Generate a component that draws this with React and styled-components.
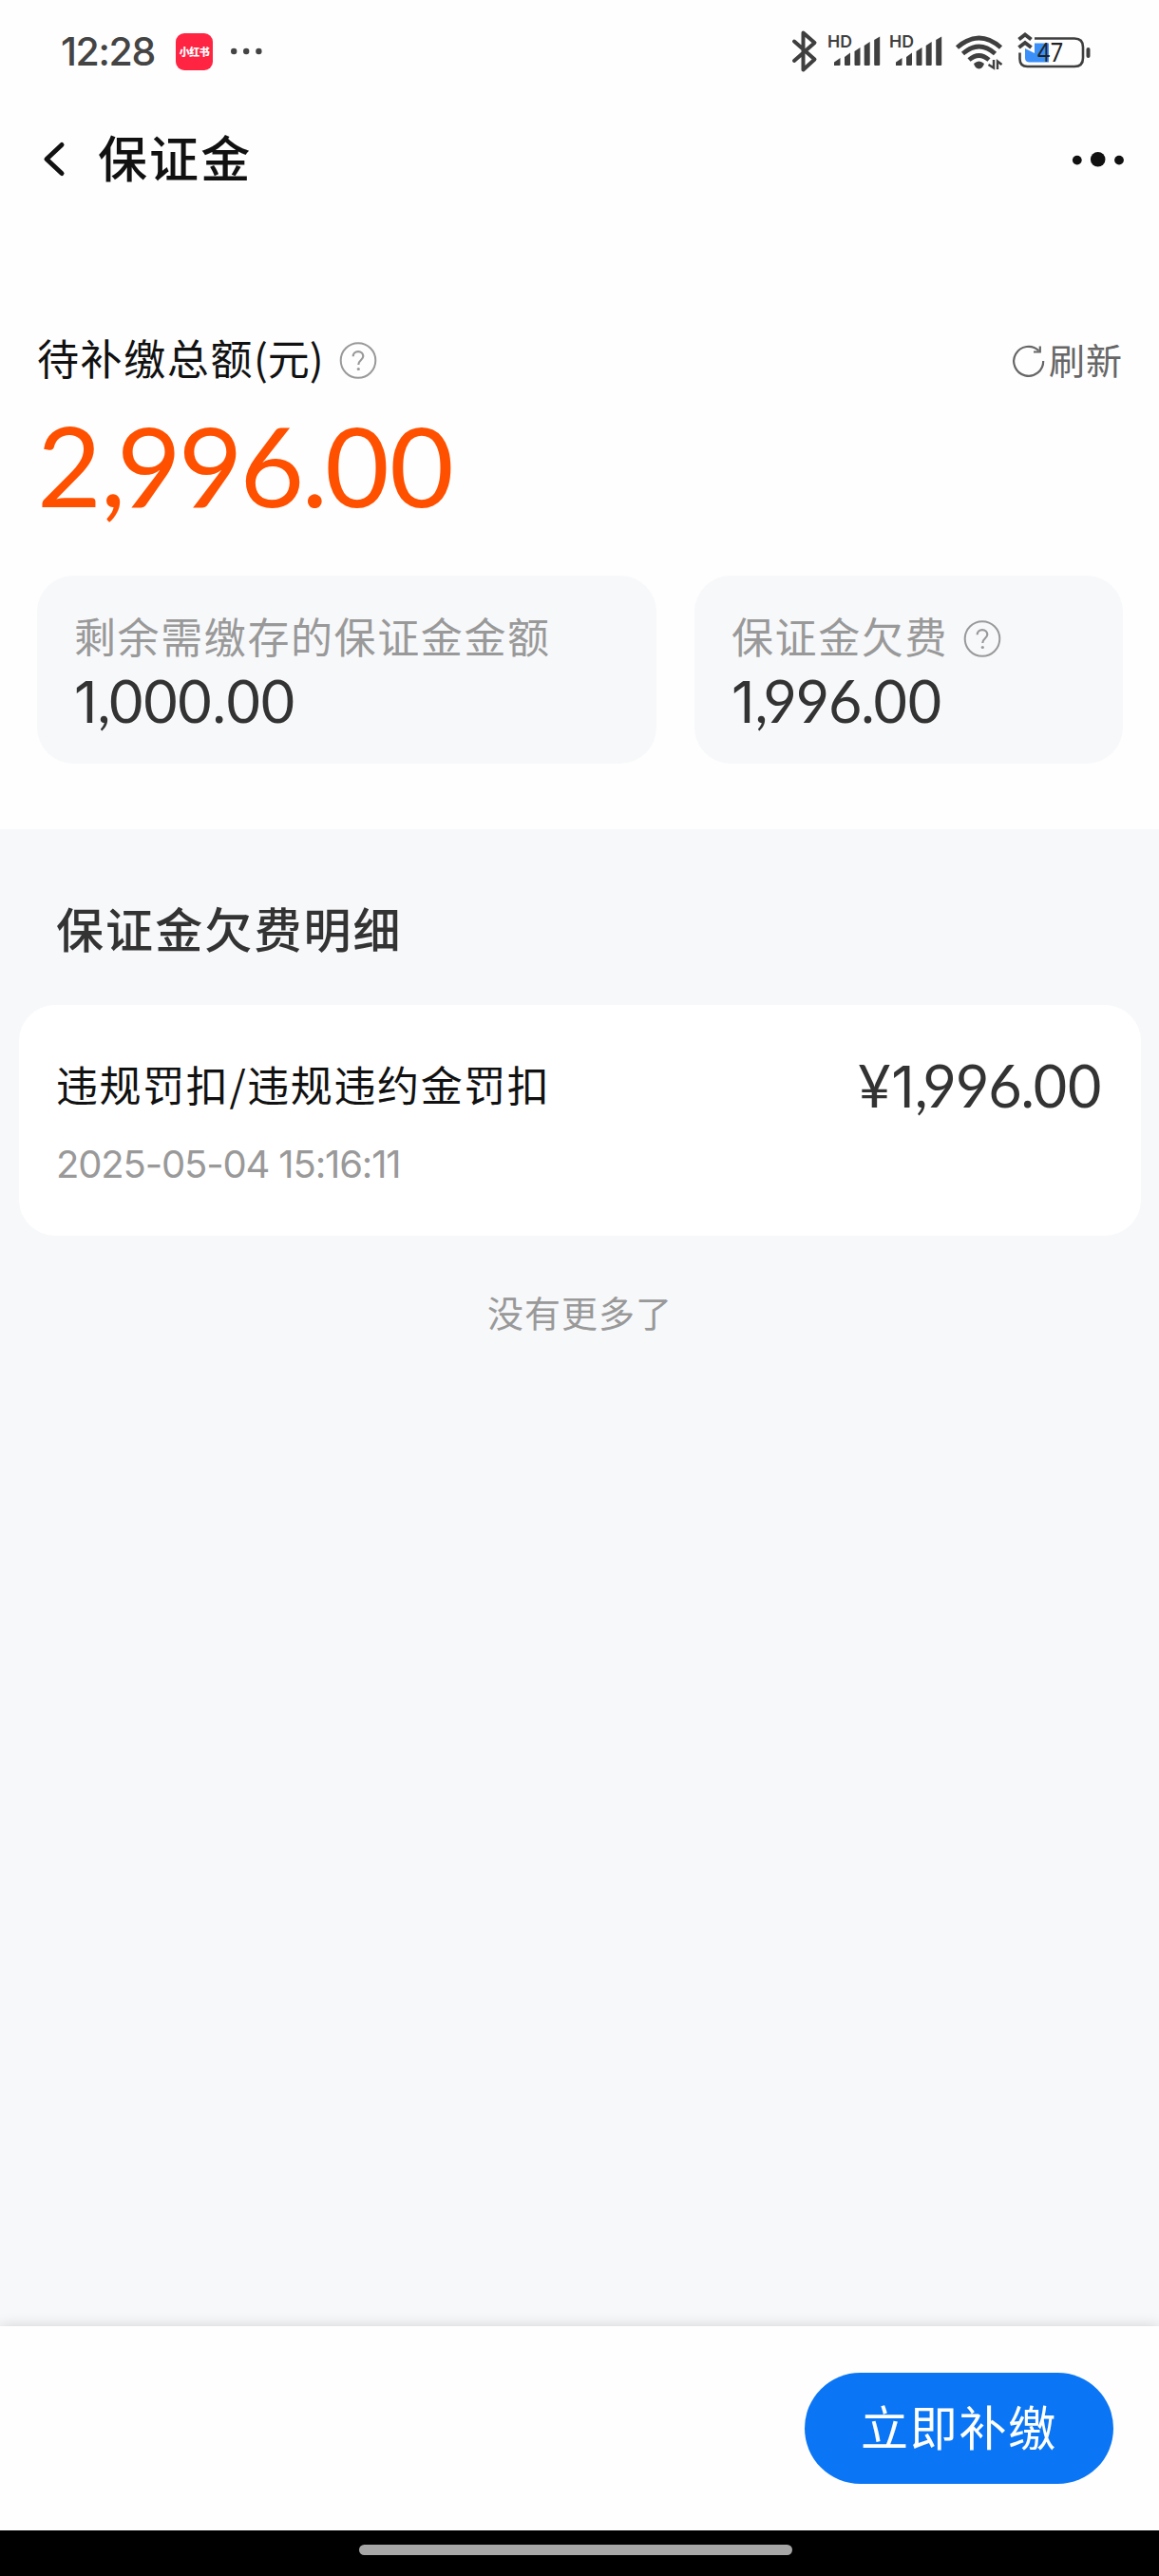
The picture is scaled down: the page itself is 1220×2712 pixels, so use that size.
import React from 'react';
import styled, { createGlobalStyle } from 'styled-components';

const GlobalStyle = createGlobalStyle`
  *, *::before, *::after { box-sizing: border-box; }
  html, body { margin: 0; padding: 0; background: #fefefe; }
  body { font-family: Inter, "Noto Sans CJK SC", sans-serif; color: #111; }
  svg { display: block; flex: none; overflow: visible; }
`;

const cjk = '"Noto Sans CJK SC", sans-serif';

const Screen = styled.div`
  width: 1220px;
  height: 2712px;
  display: flex;
  flex-direction: column;
  background: #fefefe;
  overflow: hidden;
`;

const StatusBar = styled.div`
  height: 108px;
  flex: none;
  display: flex;
  justify-content: space-between;
  padding: 0 73px 0 64px;
`;

const StatusGroup = styled.div`
  display: flex;
  align-items: center;
`;

const Clock = styled.span`
  width: 121px;
  font: 500 41px/108px Inter, sans-serif;
  letter-spacing: -1.4px;
  color: #444;
  white-space: nowrap;
`;

const AppBadge = styled.span`
  width: 39px;
  height: 39px;
  margin: 1px 19px 0 0;
  border-radius: 9px;
  background: #ff2442;
  color: #fff;
  font: 900 11px/39px ${cjk};
  letter-spacing: -0.5px;
  text-align: center;
  white-space: nowrap;
`;

const NavBar = styled.div`
  height: 120px;
  flex: none;
  display: flex;
  align-items: center;
  padding: 0 36px 0 45px;
`;

const NavTitle = styled.h1`
  flex: 1;
  margin: 0 0 0 34px;
  padding-bottom: 6px;
  font: 500 52px/114px ${cjk};
  letter-spacing: 2.1px;
  color: #111;
`;

const Summary = styled.section`
  height: 645px;
  flex: none;
  padding: 115px 38px 0 39px;
`;

const Row = styled.div`
  display: flex;
  align-items: center;
`;

const TotalRow = styled(Row)`
  height: 70px;
  justify-content: space-between;
`;

const Label = styled.span`
  font: 400 44px/${p => p.$line || 66}px ${cjk};
  letter-spacing: 1.6px;
  color: ${p => p.$color || '#111'};
  margin-right: ${p => p.$gap || 0}px;
  padding-bottom: 4px;
  white-space: nowrap;
`;

const Unit = styled.span`
  letter-spacing: 0;
`;

const Refresh = styled(Row)`
  gap: 4px;
  padding-top: 3px;
  color: #666;
  font: 400 38px/60px ${cjk};
  letter-spacing: 1px;

  span { padding-bottom: 4px; }
`;

const Amount = styled.div`
  font-family: Lato, sans-serif;
  font-size: ${p => p.$size}px;
  line-height: ${p => p.$line}px;
  color: ${p => p.$color || '#333'};
  white-space: nowrap;
`;

const TotalAmount = styled(Amount)`
  padding-top: 14px;
`;

const Tracked = styled.span`
  letter-spacing: ${p => p.$em}em;
`;

const One = styled.span`
  font-family: Inter, sans-serif;
  font-size: 0.985em;
`;

const Cards = styled.div`
  display: grid;
  grid-template-columns: 652px 451px;
  gap: 40px;
  margin-top: 55px;
`;

const Card = styled.div`
  height: 198px;
  padding: 32px 39px 0;
  border-radius: 38px;
  background: #f7f8fa;
`;

const CardTop = styled(Row)`
  height: 66px;
`;

const Details = styled.section`
  flex: 1;
  padding: 0 19px 0 20px;
  background: #f7f8fa;
`;

const Heading = styled.h2`
  margin: 0;
  padding: 53px 0 0 39px;
  height: 185px;
  font: 500 50px/100px ${cjk};
  letter-spacing: 2.1px;
  color: #333;
`;

const Item = styled.div`
  height: 243px;
  padding: 50px 41px 0 39px;
  border-radius: 38px;
  background: #fff;
`;

const ItemTop = styled(Row)`
  justify-content: space-between;
  height: 70px;
`;

const DateText = styled.div`
  font: 400 40px/95px Inter, sans-serif;
  letter-spacing: -1.15px;
  color: #999;
`;

const EndNote = styled.p`
  margin: 0;
  padding-top: 50px;
  text-align: center;
  font: 400 38px/60px ${cjk};
  letter-spacing: 1px;
  color: #999;
`;

const Footer = styled.footer`
  height: 215px;
  flex: none;
  display: flex;
  justify-content: flex-end;
  padding: 49px 48px 0 0;
  background: #fefefe;
  box-shadow: 0 0 14px rgba(0, 0, 0, 0.16);
`;

const PayButton = styled.button`
  width: 325px;
  height: 117px;
  padding: 0 0 6px;
  border: 0;
  border-radius: 59px;
  background: #0b76f5;
  color: #fff;
  font: 400 50px/111px ${cjk};
  letter-spacing: 1.8px;
`;

const HomeArea = styled.div`
  height: 48px;
  flex: none;
  display: flex;
  justify-content: center;
  padding: 15px 8px 0 0;
  background: #000;
  z-index: 1;
`;

const HomeBar = styled.div`
  width: 456px;
  height: 11px;
  border-radius: 6px;
  background: #a6a6a6;
`;

/* Everything from the thousands separator on, with its own kerning in em. */
const Rest = ({ digits, comma, track = -0.018, cents = 0.012 }) => (
  <>
    <Tracked $em={comma}>,</Tracked>
    <Tracked $em={track}>{digits}.</Tracked>
    <Tracked $em={cents}>00</Tracked>
  </>
);

const MoreDots = () => (
  <svg width="32" height="8" viewBox="0 0 32 8" fill="#444">
    <circle cx="3.2" cy="4" r="3.2" />
    <circle cx="16.2" cy="4" r="3.2" />
    <circle cx="29.4" cy="4" r="3.2" />
  </svg>
);

const Signal = ({ x }) => (
  <g transform={`translate(${x} 0)`} fill="#3f3f3f">
    <text x="-1" y="27.500" fontFamily="Inter" fontSize="17.500" fontWeight="600" textLength="26" lengthAdjust="spacingAndGlyphs">HD</text>
    <path d="M6 47V43.500L12.500 39V46Q12.500 47 11.500 47H7Q6 47 6 47Z" />
    <path d="M17 47V38L23 33.500V46Q23 47 22 47H18Q17 47 17 46Z" />
    <path d="M27.500 47V32L33.500 28V46Q33.500 47 32.500 47H28.500Q27.500 47 27.500 46Z" />
    <path d="M37.700 46V26L43.700 22V46Q43.700 47 42.700 47H38.700Q37.700 47 37.700 46Z" />
    <path d="M48.200 46V20L54.200 16.500V46Q54.200 47 53.200 47H49.200Q48.200 47 48.200 46Z" />
  </g>
);

/* Bluetooth, two signal meters, Wi-Fi and battery share one strip. */
const StatusIcons = () => (
  <svg width="314" height="64" viewBox="0 0 314 64">
    <g fill="none" stroke="#3f3f3f" strokeWidth="4" strokeLinecap="round" strokeLinejoin="round">
      <path d="M3 21.500L24.500 40.500L12.500 51.500V12.500L24.500 23L3 42" />
    </g>
    <Signal x={39} />
    <Signal x={104} />
    <g fill="none" stroke="#3f3f3f" strokeWidth="4.800">
      <path d="M174.500 28Q197.500 8 220.500 28" />
      <path d="M180.500 34.500Q197.500 19.500 214.500 34.500" />
      <path d="M187 41Q197.500 32 208 41" />
    </g>
    <path d="M192 45Q197.500 40 203 45Q201.500 50 197.500 50.500Q193.500 50 192 45Z" fill="#3f3f3f" />
    <path d="M213 41V49.500L207.500 46M217 51V42.500L221.500 46" fill="none" stroke="#3f3f3f" strokeWidth="2.400" />
    <path d="M246 29L256 34V23.500H271V43.500H250Q246 43 246 39Z" fill="#3b8ff8" />
    <path d="M256 18.500H298Q307 18.500 307 27.500V39Q307 48 298 48H248.500Q240.500 48 240.500 40V33.500" fill="none" stroke="#3f3f3f" strokeWidth="2.600" />
    <path d="M239.500 19.500L246 14.500L252.500 19.500M239.500 28L246 23L252.500 28" fill="none" stroke="#3f3f3f" strokeWidth="4" />
    <rect x="310.500" y="28" width="4" height="11" rx="2" fill="#3f3f3f" />
    <text x="259" y="43" fontFamily="Lato" fontSize="26" fill="#222" textLength="27" lengthAdjust="spacingAndGlyphs">47</text>
  </svg>
);

const BackIcon = () => (
  <svg width="24" height="38" viewBox="0 0 24 38">
    <path d="M20 3.500L4 18.500L20 33.500" fill="none" stroke="#111" strokeWidth="5" strokeLinecap="round" strokeLinejoin="round" />
  </svg>
);

const MenuIcon = () => (
  <svg width="55" height="16" viewBox="0 0 55 16" fill="#111">
    <circle cx="4.800" cy="8.600" r="4.900" />
    <circle cx="26.700" cy="7.700" r="7.800" />
    <circle cx="49" cy="8.600" r="4.900" />
  </svg>
);

const HelpIcon = () => (
  <svg width="40" height="38" viewBox="0 0 40 38">
    <g transform="translate(0 1)">
      <circle cx="20" cy="19.500" r="18.300" fill="none" stroke="#999" strokeWidth="2" />
      <path d="M14.700 15.300C14.700 12.300 17 10.200 20 10.200C23 10.200 25.300 12.300 25.300 15.100C25.300 19 20.300 19.200 20.300 24" fill="none" stroke="#999" strokeWidth="2.200" />
      <circle cx="20.300" cy="28.500" r="1.600" fill="#999" />
    </g>
  </svg>
);

const RefreshIcon = () => (
  <svg width="34" height="34" viewBox="0 0 34 34" fill="none" stroke="#666" strokeWidth="2.200">
    <path d="M32.200 17A15.500 15.500 0 1 1 27.500 6.200" />
    <path d="M28.800 1.500V7.500H22" />
  </svg>
);

export default function App() {
  return (
    <Screen>
      <GlobalStyle />
      <StatusBar>
        <StatusGroup>
          <Clock>12:28</Clock>
          <AppBadge>小红书</AppBadge>
          <MoreDots />
        </StatusGroup>
        <StatusGroup>
          <StatusIcons />
        </StatusGroup>
      </StatusBar>
      <NavBar>
        <BackIcon />
        <NavTitle>保证金</NavTitle>
        <MenuIcon />
      </NavBar>
      <Summary>
        <TotalRow>
          <Row>
            <Label $gap={16}>待补缴总额<Unit>(元)</Unit></Label>
            <HelpIcon />
          </Row>
          <Refresh>
            <RefreshIcon />
            <span>刷新</span>
          </Refresh>
        </TotalRow>
        <TotalAmount $size={117} $line={124} $color="#ff5000">
          <Tracked $em={-0.01}>2</Tracked>
          <Rest digits="996" comma={-0.08} track={-0.026} cents={0.002} />
        </TotalAmount>
        <Cards>
          <Card>
            <CardTop>
              <Label $line={62} $color="#999">剩余需缴存的保证金金额</Label>
            </CardTop>
            <Amount $size={61} $line={67}><One>1</One><Rest digits="000" comma={-0.02} track={0.012} /></Amount>
          </Card>
          <Card>
            <CardTop>
              <Label $line={62} $color="#999" $gap={16}>保证金欠费</Label>
              <HelpIcon />
            </CardTop>
            <Amount $size={61} $line={67}><One>1</One><Rest digits="996" comma={-0.08} /></Amount>
          </Card>
        </Cards>
      </Summary>
      <Details>
        <Heading>保证金欠费明细</Heading>
        <Item>
          <ItemTop>
            <Label>违规罚扣/违规违约金罚扣</Label>
            <Amount $size={61} $line={70}>¥<One>1</One><Rest digits="996" comma={-0.08} /></Amount>
          </ItemTop>
          <DateText>2025-05-04 15:16:11</DateText>
        </Item>
        <EndNote>没有更多了</EndNote>
      </Details>
      <Footer>
        <PayButton>立即补缴</PayButton>
      </Footer>
      <HomeArea>
        <HomeBar />
      </HomeArea>
    </Screen>
  );
}
